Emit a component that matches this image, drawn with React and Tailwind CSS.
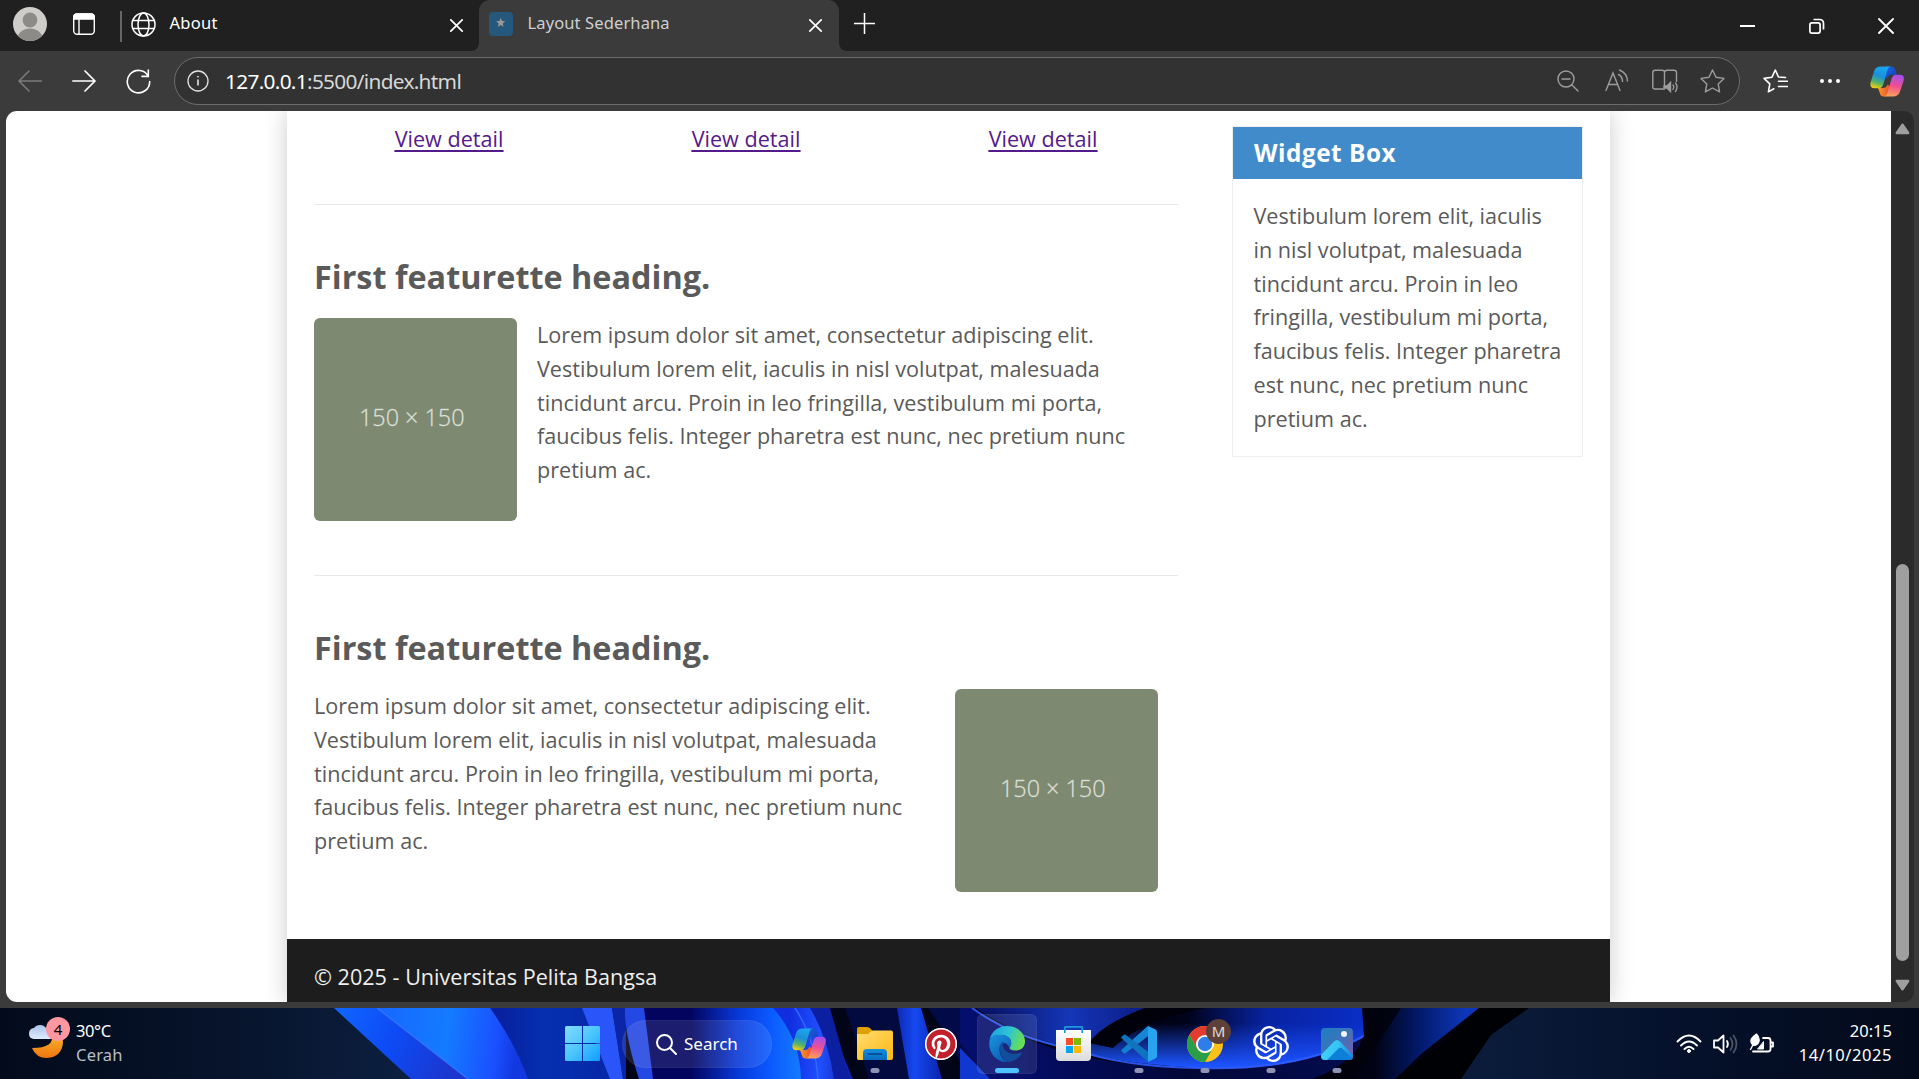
import React from "react";
import { SiOpenai } from "react-icons/si";
import { FaPinterest } from "react-icons/fa";

const lorem = "Lorem ipsum dolor sit amet, consectetur adipiscing elit. Vestibulum lorem elit, iaculis in nisl volutpat, malesuada tincidunt arcu. Proin in leo fringilla, vestibulum mi porta, faucibus felis. Integer pharetra est nunc, nec pretium nunc pretium ac.";
const widgetText = "Vestibulum lorem elit, iaculis in nisl volutpat, malesuada tincidunt arcu. Proin in leo fringilla, vestibulum mi porta, faucibus felis. Integer pharetra est nunc, nec pretium nunc pretium ac.";

const Close = ({ s = 13, w = 1.7 }) => (
  <svg width={s} height={s} viewBox="0 0 13 13" fill="none" stroke="#fff" strokeWidth={w} strokeLinecap="round"><path d="M.8.8l11.4 11.4M12.2.8L.8 12.2" /></svg>
);

function Copilot({ id }) {
  return (
    <svg width="34" height="31" viewBox="0 0 34 31" className="block">
      <defs>
        <linearGradient id={id + "a"} x1=".6" y1="0" x2=".3" y2="1"><stop offset="0" stopColor="#1aa8f0" /><stop offset=".45" stopColor="#1c8fd8" /><stop offset=".75" stopColor="#55b46a" /><stop offset="1" stopColor="#f5cc10" /></linearGradient>
        <linearGradient id={id + "b"} x1=".6" y1="0" x2=".4" y2="1"><stop offset="0" stopColor="#a44df0" /><stop offset=".5" stopColor="#ee5090" /><stop offset="1" stopColor="#fda35c" /></linearGradient>
        <linearGradient id={id + "c"} x1="0" y1="0" x2="1" y2="1"><stop offset="0" stopColor="#1e64e0" /><stop offset="1" stopColor="#1440b8" /></linearGradient>
        <linearGradient id={id + "d"} x1="0" y1="0" x2="1" y2="0"><stop offset="0" stopColor="#f89a28" /><stop offset="1" stopColor="#e8482c" /></linearGradient>
      </defs>
      <path d="M16 .5h5.500c2 0 3 1 3.600 3l1.600 5.200h-5.200c-2.500 0-3.500 1.200-4.200 3.500L13 10z" fill={`url(#${id}c)`} />
      <path d="M8 22h5c2 0 3.500-1 4.500-3.500L21 21l-1.500 6c-.8 2.400-2 3.500-4 3.500h-2c-2 0-3-1-3.500-3z" fill={`url(#${id}d)`} />
      <path d="M11 .5h10.500c-2.500 0-3.600 2-4.400 4.700l-3.600 12.500c-.9 3-2.300 4.600-4.700 4.600H4.500C1 22.300-.3 19.500.7 16L4 5.500C5 2.200 7 .5 11 .5z" fill={`url(#${id}a)`} />
      <path d="M23 30.500H13.500c2.300 0 3.500-2 4.200-4.500l3.600-12.500c.9-3 2.300-4.800 4.700-4.800h4c3.500 0 4.500 2.800 3.500 6.300L30 25.500c-1 3.400-3.500 5-7 5z" fill={`url(#${id}b)`} />
    </svg>
  );
}

function TabBar() {
  return (
    <div className="flex h-[51px] items-center bg-[#202020] text-[#fff]">
      <svg width="34" height="34" viewBox="0 0 34 34" className="-mt-[3px] ml-[13px]">
        <clipPath id="av"><circle cx="17" cy="17" r="17" /></clipPath>
        <g clipPath="url(#av)"><rect width="34" height="34" fill="#cfcdca" /><circle cx="17" cy="13" r="7.400" fill="#8d8b88" /><ellipse cx="17" cy="34" rx="13.500" ry="12.500" fill="#8d8b88" /></g>
      </svg>
      <svg width="22" height="22" viewBox="0 0 22 22" className="-mt-[3px] ml-[26px]" fill="none" stroke="#fff" strokeWidth="1.400">
        <rect x=".7" y=".9" width="20.600" height="20.300" rx="3.500" /><path d="M.7 6V4Q.7.9 4 .9h14q3.300 0 3.300 3.100v2z" fill="#fff" /><path d="M6 6v15" />
      </svg>
      <div className="mt-[2px] ml-[25px] h-[31px] w-[1.500px] bg-[#666]" />
      <svg width="25" height="25" viewBox="0 0 25 25" className="-mt-[3px] ml-[9px]" fill="none" stroke="#fff" strokeWidth="1.500">
        <circle cx="12.500" cy="12.500" r="11.500" /><ellipse cx="12.500" cy="12.500" rx="5.500" ry="11.500" /><path d="M2 8.500h21M2 16.500h21" />
      </svg>
      <span className="-mt-[4px] ml-[14px] w-[280px] text-[16.500px] tracking-[0.300px]">About</span>
      <div className="-mt-[1px] flex w-[13px] shrink-0"><Close /></div>
      <div className="relative ml-[16px] flex h-[51px] w-[360px] shrink-0 items-center rounded-t-[11px] bg-[#3b3b3b]">
        <svg width="9" height="9" className="absolute bottom-0 -left-[9px]"><path d="M9 0v9H0Q9 9 9 0" fill="#3b3b3b" /></svg>
        <svg width="9" height="9" className="absolute -right-[9px] bottom-0"><path d="M0 0v9h9Q0 9 0 0" fill="#3b3b3b" /></svg>
        <svg width="24" height="24" viewBox="0 0 24 24" className="-mt-[3px] ml-[10px]"><rect width="24" height="24" rx="4" fill="#25587c" /><path d="M11.700 6l1.300 3.100 3.300.2-2.600 2.100.9 3.300-2.900-1.800-2.900 1.800.9-3.300L7.100 9.300l3.300-.2z" fill="#9a9a9a" /></svg>
        <span className="-mt-[4px] ml-[15px] w-[281px] text-[16.500px] tracking-[0.120px] text-[#cfcfcf]">Layout Sederhana</span>
        <div className="-mt-[1px] flex"><Close /></div>
      </div>
      <svg width="21" height="21" viewBox="0 0 21 21" className="-mt-[4px] ml-[15px]" stroke="#fff" strokeWidth="1.500"><path d="M10.500 0v21M0 10.500h21" /></svg>
      <div className="ml-auto flex items-center">
        <div className="h-[2px] w-[15px] bg-white" />
        <svg width="16" height="16" viewBox="0 0 16 16" className="ml-[54px]" fill="none" stroke="#fff" strokeWidth="1.700"><rect x=".9" y="4.900" width="10.200" height="10.200" rx="2" /><path d="M4.500 1.500h6q4 0 4 4v6" /></svg>
        <div className="mr-[25px] ml-[53px]"><Close s={16} w={1.500} /></div>
      </div>
    </div>
  );
}

function Toolbar() {
  return (
    <div className="flex h-[60px] items-center bg-[#3b3b3b]">
      <svg width="24" height="22" viewBox="0 0 24 22" className="ml-[18px]" fill="none" stroke="#7c7c7c" strokeWidth="1.500" strokeLinecap="round" strokeLinejoin="round"><path d="M11 1L1 11l10 10M1 11h22.500" /></svg>
      <svg width="24" height="22" viewBox="0 0 24 22" className="ml-[30px]" fill="none" stroke="#fff" strokeWidth="1.700" strokeLinecap="round" strokeLinejoin="round"><path d="M13 1l10 10-10 10M23 11H.8" /></svg>
      <svg width="25" height="25" viewBox="0 0 25 25" className="ml-[30px]" fill="none" stroke="#fff" strokeWidth="1.600" strokeLinecap="round"><path d="M22.300 7.200A11.200 11.200 0 1 0 23.700 12.500M22.300 1v6.400H16" /></svg>
      <div className="ml-[23px] flex h-[48px] w-[1566px] items-center rounded-full border border-[#6c6c6c] bg-[#323232]">
        <svg width="22" height="22" viewBox="0 0 22 22" className="ml-[12px]" fill="none" stroke="#e4e4e4" strokeWidth="1.300"><circle cx="11" cy="11" r="10" /><path d="M11 9.500v6" strokeWidth="1.600" /><circle cx="11" cy="6.700" r=".6" fill="#e4e4e4" strokeWidth=".6" /></svg>
        <span className="mt-[2px] ml-[16px] text-[20.800px] tracking-[-0.680px] text-[#d8d8d8]"><span className="text-white">127.0.0.1</span>:5500/index.html</span>
        <div className="mr-[14px] ml-auto flex items-center text-[#9d9d9d]">
          <svg width="22" height="22" viewBox="0 0 22 22" fill="none" stroke="currentColor" strokeWidth="1.400" strokeLinecap="round"><circle cx="9" cy="9" r="8" /><path d="M5 9h8M15 15l6 6" /></svg>
          <svg width="24" height="24" viewBox="0 0 24 24" className="ml-[26px]" fill="none" stroke="currentColor" strokeWidth="1.400" strokeLinecap="round"><path d="M1 21.500L8 4l7 17.500M3.500 15.500h9M13.500 5.500q4 2 4 7M14.500 1q7.500 3 8 11" /></svg>
          <svg width="26" height="25" viewBox="0 0 26 25" className="ml-[23px]" fill="none" stroke="currentColor" strokeWidth="1.400" strokeLinecap="round"><path d="M12.500 20H3q-2.200 0-2.200-2V3.500Q.8 1.300 3 1.300h7q2.500 0 2.500 2v13M12.500 3.500q0-2.200 2.500-2.200h7q2.500 0 2.500 2.200v9" /><path d="M12 17h3l3.500-3.500v9L15 19h-3z" fill="currentColor" /><path d="M21 16q1.500 2 0 4.500M23.500 14q3 4 0 8.500" /></svg>
          <svg width="25" height="24" viewBox="0 0 25 24" className="ml-[22px]" fill="none" stroke="currentColor" strokeWidth="1.400" strokeLinejoin="round"><path d="M12.500 1l3.500 7.300 8 1.100-5.800 5.500 1.400 7.900-7.100-3.800-7.100 3.800 1.400-7.900L1 9.400l8-1.100z" /></svg>
        </div>
      </div>
      <svg width="25" height="24" viewBox="0 0 25 24" className="ml-[23px]" fill="none" stroke="#fff" strokeWidth="1.600" strokeLinejoin="round" strokeLinecap="round"><path d="M22.500 8.500l-7-.5L12.300 1 9 8.200l-8 1.200 5.800 5.500-1.400 7.900 5.500-3M15.500 12.300h9M15.500 17.500h9" /></svg>
      <div className="ml-[32px] flex gap-[4px]"><i className="size-[4px] rounded-full bg-white" /><i className="size-[4px] rounded-full bg-white" /><i className="size-[4px] rounded-full bg-white" /></div>
      <div className="ml-[30px]"><Copilot id="t" /></div>
    </div>
  );
}

const Placeholder = () => (
  <div className="flex h-[202.500px] w-[202.500px] shrink-0 items-center justify-center rounded-[6px] bg-[#7d8970] pr-[7px] pb-[2px] text-[23.400px] font-light text-[#e6e9e2] [-webkit-text-stroke:0.300px_#c9cec2]">150 × 150</div>
);

const Heading = () => <h2 className="text-[32.400px] leading-[44px] font-bold text-[#5a5a5a]">First featurette heading.</h2>;

function Page() {
  return (
    <div className="flex h-[897px] bg-[#3b3b3b] pr-[5px] pb-[6px] pl-[6px]">
      <div className="flex w-[1885px] justify-center overflow-hidden rounded-l-[11px] bg-white font-['Open_Sans',sans-serif] text-[21.600px] leading-[33.750px] text-[#5a5a5a]">
        <div className="flex h-[891px] w-[1323px] flex-col shadow-[0_0_22px_#ccc]">
          <div className="flex h-[828px] pl-[27px]">
            <main className="w-[864px]">
              <div className="flex h-[94px] border-b border-[#e8e8e8] pt-[11px] text-center text-[#551a8b] underline decoration-[1.500px] underline-offset-[3px]">
                <a className="-ml-[13.500px] w-[297px] shrink-0">View detail</a><a className="w-[297px] shrink-0">View detail</a><a className="w-[297px] shrink-0">View detail</a>
              </div>
              <section className="h-[371px] border-b border-[#e8e8e8] pt-[49px]">
                <Heading />
                <div className="mt-[20px] flex gap-[20.500px]"><Placeholder /><p className="w-[610px]">{lorem}</p></div>
              </section>
              <section className="pt-[49px]">
                <Heading />
                <div className="mt-[20px] flex justify-between pr-[20.500px]"><p className="w-[600px]">{lorem}</p><Placeholder /></div>
              </section>
            </main>
            <aside className="mt-[15px] ml-[54px] h-[331px] w-[351px] border border-[#eee]">
              <h3 className="h-[52px] bg-[#428bca] pl-[21px] text-[24.300px] leading-[52px] font-bold tracking-[0.550px] text-white">Widget Box</h3>
              <p className="pt-[20px] pr-[20px] pl-[20.500px]">{widgetText}</p>
            </aside>
          </div>
          <footer className="h-[63px] bg-[#1d1d1d] pt-[21px] pl-[27px] text-[#eee]">© 2025 - Universitas Pelita Bangsa</footer>
        </div>
      </div>
      <div className="flex w-[23px] flex-col items-center rounded-r-[10px] bg-[#2b2b2b]">
        <svg width="15" height="12" viewBox="0 0 15 12" className="mt-[12px]"><path d="M7.500 1.800L13.200 10H1.800z" fill="#9f9f9f" stroke="#9f9f9f" strokeWidth="2.400" strokeLinejoin="round" /></svg>
        <div className="mt-[429px] h-[397px] w-[13px] rounded-full bg-[#9f9f9f]" />
        <svg width="15" height="12" viewBox="0 0 15 12" className="mt-[18px]"><path d="M7.500 10.200L13.200 2H1.800z" fill="#9f9f9f" stroke="#9f9f9f" strokeWidth="2.400" strokeLinejoin="round" /></svg>
      </div>
    </div>
  );
}

function Wallpaper() {
  const g = (id, stops, p = {}) => (
    <linearGradient id={id} gradientUnits="userSpaceOnUse" y1="0" y2="0" {...p}>{stops.map(([o, c]) => <stop key={o} offset={o} stopColor={c} />)}</linearGradient>
  );
  return (
    <svg className="absolute inset-0" width="1919" height="71" viewBox="0 0 1919 71">
      <defs>
        {g("w0", [[0, "#030b1b"], [0.6, "#07142c"], [1, "#0c1f40"]], { x1: 0, x2: 400 })}
        {g("w1", [[0, "#1166ff"], [0.5, "#0d4bf5"], [1, "#1b37d0"]], { x1: 334, x2: 450, y2: 60 })}
        {g("w2", [[0, "#1768ff"], [0.5, "#147bff"], [0.85, "#1a50ff"], [1, "#1238e0"]], { x1: 380, x2: 520, y2: 20 })}
        {g("w3", [[0, "#071d9c"], [0.5, "#0530b0"], [1, "#0628a8"]], { x1: 490, x2: 600 })}
        {g("w4", [[0, "#03045e"], [0.3, "#03045e"], [0.6, "#0838d8"], [0.8, "#0a58ff"], [1, "#147aff"]], { x1: 644, x2: 800 })}
        {g("w5", [[0, "#102ee0"], [0.5, "#2050ff"], [1, "#0d22a8"]], { x1: 790, x2: 850 })}
        {g("w6", [[0, "#0a1fa0"], [0.5, "#1648f0"], [1, "#0a26b0"]], { x1: 890, x2: 940 })}
        {g("w7", [[0, "#081468"], [0.5, "#1436b8"], [1, "#0a1a80"]], { x1: 990, x2: 1150 })}
        {g("w8", [[0, "#000108"], [0.3, "#01031c"], [0.6, "#0723a0"], [1, "#0a2ec8"]], { x1: 1110, x2: 1370 })}
        {g("w9", [[0, "#010314"], [0.5, "#031a6c"], [1, "#0d36b8"]], { x1: 1375, x2: 1465 })}
        {g("wg", [[0, "#1c50ff00"], [1, "#1c54ff"]], { x1: 1230, x2: 1230, y1: 15, y2: 58 })}
        {g("wr", [[0, "#0a1c3a"], [0.5, "#05102a"], [1, "#030a1a"]], { x1: 1480, x2: 1919 })}
        {g("wb", [[0, "#040e6c"], [0.5, "#020738"], [1, "#040c50"]], { x1: 1000, x2: 1370 })}
      </defs>
      <rect width="1919" height="71" fill="#020418" />
      <path d="M0 0h420v71H0z" fill="url(#w0)" />
      <path d="M334 0h70l80 71h-73z" fill="url(#w1)" />
      <path d="M377 0h130l22 71h-61z" fill="url(#w2)" />
      <path d="M377 0l91 71" stroke="#3d7bff" strokeWidth="1.500" opacity=".7" />
      <path d="M490 0h122l13 71h-97Q515 35 490 0z" fill="url(#w3)" />
      <path d="M582 0h30l11 71h-13z" fill="#2a55f8" />
      <path d="M612 0h14v71h-3z" fill="#0a25a8" />
      <path d="M644 0h160l20 71H640z" fill="url(#w4)" />
      <path d="M625 0h19l9 71h-14Q624 25 625 0z" fill="#2448e4" />
      <path d="M773 0h50l30 71h-52Q800 30 773 0z" fill="url(#w5)" />
      <path d="M795 0q20 30 23 71" stroke="#3766ff" strokeWidth="1.500" fill="none" />
      <path d="M810 0h20l20 71h-16Q828 30 810 0z" fill="#0c1fa0" />
      <path d="M845 0h52l14 71h-42z" fill="#030a40" />
      <path d="M897 0h24l21 71h-33z" fill="url(#w6)" />
      <path d="M928 0h50l20 71h-30Q950 30 928 0z" fill="#030a48" />
      <path d="M972 0q60 44 150 55t175-4q40-10 65-24l-10 44H990L960 35V0z" fill="url(#wb)" />
      <path d="M972 0h430l-38 28q-60 34-150 32T1068 40Q1010 28 972 0z" fill="url(#w8)" />
      <path d="M972 0h430l-38 28q-60 34-150 32T1068 40Q1010 28 972 0z" fill="url(#wg)" />
      <path d="M976 0h169q-42 16-56 34l-15 6Q1014 28 976 0z" fill="url(#w7)" />
      <path d="M1145 0h60q-60 10-92 40l-24-5q14-19 56-35z" fill="#00010a" />
      <path d="M972 0q42 30 100 41 52 18 128 19 100 3 164-32" stroke="#2f5cff" strokeWidth="2" fill="none" opacity=".9" />
      <path d="M960 40q20 20 30 31h-30z" fill="#1038d0" />
      <path d="M1362 0h120l-80 71h-90q45-16 52-43z" fill="#01020e" />
      <path d="M1385 0h94l-58 46-26 25h-45q18-20 35-71z" fill="url(#w9)" />
      <path d="M1385 0h16l-46 71h-40q42-20 49-43z" fill="#01020c" opacity=".85" />
      <path d="M1479 0h50l-38 27-30 44h-66l45-33z" fill="#000104" />
      <path d="M1529 0h390v71h-458l30-44z" fill="url(#wr)" />
    </svg>
  );
}

const Dot = () => <div className="absolute bottom-[6px] left-1/2 h-[5px] w-[9px] -translate-x-1/2 rounded-full bg-[#8e93b4]" />;
const Cell = ({ children, dot }) => <div className="relative flex h-[71px] w-[66px] items-center justify-center">{children}{dot && <Dot />}</div>;

const Start = () => (
  <svg width="35" height="35" viewBox="0 0 35 35"><defs><linearGradient id="st" x1="0" y1="0" x2="1" y2="1"><stop offset="0" stopColor="#84dcff" /><stop offset=".5" stopColor="#4cc6fd" /><stop offset="1" stopColor="#109cff" /></linearGradient></defs><path d="M1.500 0H17v17H0V1.500Q0 0 1.500 0zM18 0h15.500Q35 0 35 1.500V17H18zM0 18h17v17H1.500Q0 35 0 33.500zM18 18h17v15.500q0 1.500-1.500 1.500H18z" fill="url(#st)" /></svg>
);
const Explorer = () => (
  <svg width="36" height="33" viewBox="0 0 36 33"><defs><linearGradient id="ex" x1="0" y1="0" x2="1" y2="1"><stop offset="0" stopColor="#ffdc70" /><stop offset="1" stopColor="#fcb813" /></linearGradient><linearGradient id="ex2" x1="0" y1="0" x2="0" y2="1"><stop offset="0" stopColor="#1390dc" /><stop offset="1" stopColor="#0a6bc0" /></linearGradient></defs><path d="M0 2Q0 0 2 0h8q2 0 4 2l2 3v5H0z" fill="#e0a000" /><path d="M0 7h11l4-3.500h19q2 0 2 2V31q0 2-2 2H1.500Q0 33 0 31z" fill="url(#ex)" /><path d="M6 33v-7q0-4 4-4h16q4 0 4 4v7z" fill="url(#ex2)" /><path d="M11.500 27h13" stroke="#09509a" strokeWidth="1.800" strokeLinecap="round" /></svg>
);
const Edge = () => (
  <svg width="36" height="36" viewBox="0 0 36 36"><defs><linearGradient id="e1" x1="0" y1=".2" x2="1" y2=".5"><stop offset="0" stopColor="#1f9fe0" /><stop offset=".5" stopColor="#2cc4d6" /><stop offset="1" stopColor="#6be04c" /></linearGradient><linearGradient id="e2" x1="0" y1="0" x2=".7" y2="1"><stop offset="0" stopColor="#1b95e0" /><stop offset="1" stopColor="#0b5cb4" /></linearGradient></defs>
    <path d="M.5 14C2 5.500 9.500 0 18 0c10 0 18 7 18 15.500 0 5.500-4 9-9.500 9-4 0-6-1.200-6-2.500 0-.8 1.700-1.800 1.700-5C22.200 12.500 18 9 12 9 6 9 2 11 .5 14z" fill="url(#e1)" />
    <path d="M.4 15.500C1.500 11 6 8.800 11.500 8.800c6.500 0 10.700 3.700 10.700 8 0 3.500-1.700 4.200-1.700 5-3-7-9-6-10 1C10 29 14 34.500 19.500 36 9 37-.9 28.500.4 15.500z" fill="url(#e2)" />
    <path d="M14.500 15c-3 2-4.500 5-4 8.500.8 6.500 5.500 11.500 9 12.400 5.500-.4 10.500-3.600 13-8.200.5-1-.2-1.500-1-1C24 30 14 26 14 19c0-1.500.1-3 .5-4z" fill="#114f9c" />
  </svg>
);
const Store = () => (
  <svg width="35" height="35" viewBox="0 0 35 35"><defs><linearGradient id="so" x1="0" y1="0" x2="0" y2="1"><stop offset="0" stopColor="#fff" /><stop offset="1" stopColor="#dcdcdc" /></linearGradient></defs><path d="M0 4h35v27q0 4-4 4H4q-4 0-4-4z" fill="url(#so)" /><path d="M8.800 7V1.500Q8.800.8 9.500.8h16q.7 0 .7.700V7" fill="none" stroke="#1c98dc" strokeWidth="1.700" /><path d="M10 12h7v7h-7z" fill="#f25022" /><path d="M18 12h7v7h-7z" fill="#7fba00" /><path d="M10 20h7v7h-7z" fill="#00a4ef" /><path d="M18 20h7v7h-7z" fill="#ffb900" /></svg>
);
const Code = () => (
  <svg width="36" height="36" viewBox="0 0 36 36"><path d="M27 0L.8 23.500q-1 1 0 2l2 1.800q.8.600 1.700 0L27 10z" fill="#1180cf" /><path d="M27 36L.8 12.500q-1-1 0-2l2-1.800q.8-.6 1.700 0L27 26z" fill="#0f73bd" /><path d="M27 0l7.500 3.500Q36 4.300 36 5.800v24.400q0 1.500-1.500 2.300L27 36z" fill="#29a3f0" /><path d="M27 0L12 13.600l5.500 3.900L27 10z" fill="#1686d4" /></svg>
);
const Chrome = () => (
  <svg width="36" height="36" viewBox="0 0 36 36"><circle cx="18" cy="18" r="18" fill="#fbc116" /><path d="M2.400 9A18 18 0 0 1 33.600 9H18L10.200 22.500z" fill="#e33b2e" /><path d="M2.400 9l7.800 13.500q3 4.500 7.800 4.500 5 0 7.800-4.500L18 36A18 18 0 0 1 2.400 9z" fill="#2a9d48" /><circle cx="18" cy="18" r="9" fill="#fff" /><circle cx="18" cy="18" r="7.200" fill="#2f7de9" /></svg>
);
const Photos = () => (
  <svg width="32" height="32" viewBox="0 0 32 32"><defs><linearGradient id="ph" x1="0" y1="0" x2="1" y2="1"><stop offset="0" stopColor="#1b7fc4" /><stop offset=".5" stopColor="#3f72b8" /><stop offset="1" stopColor="#8a5aa8" /></linearGradient><linearGradient id="ph2" x1="0" y1="0" x2="1" y2="0"><stop offset="0" stopColor="#3fd0fa" /><stop offset=".55" stopColor="#35c3f4" /><stop offset="1" stopColor="#1580d8" /></linearGradient><clipPath id="pc"><rect width="32" height="32" rx="4" /></clipPath></defs><g clipPath="url(#pc)"><rect width="32" height="32" fill="url(#ph)" /><path d="M-1 28l14-14.500q3-3 6 0L33 28v5H-1z" fill="url(#ph2)" /><path d="M5 33l12-12q2.500-2.500 5 0l12 12z" fill="#0c7fd8" /></g><circle cx="23" cy="6" r="3" fill="#f2f4f8" /></svg>
);

function Taskbar() {
  return (
    <div className="relative flex h-[71px] overflow-hidden bg-[#030b1c] text-[16.500px] text-white">
      <Wallpaper />
      <div className="relative flex w-[549px]">
        <div className="relative mt-[8px] ml-[28px] h-[42px] w-[42px]">
          <svg width="42" height="43" viewBox="0 0 42 43"><defs><linearGradient id="mo" x1="0" y1="0" x2="0" y2="1"><stop offset="0" stopColor="#fbb82c" /><stop offset="1" stopColor="#ee7410" /></linearGradient><linearGradient id="cl" x1="0" y1="0" x2="0" y2="1"><stop offset="0" stopColor="#a9c4ee" /><stop offset="1" stopColor="#e0ebfb" /></linearGradient></defs><path d="M4 32Q8 42 19 42q15-1 16-16 0-4-2-7l-9-1q3 14-20 14z" fill="url(#mo)" /><path d="M6 23q-5-.5-5-5.500t5-5.500q2-3 6-3 5 0 7 5l4 9z" fill="url(#cl)" /></svg>
          <span className="absolute top-[1px] left-[18px] flex size-[24px] items-center justify-center rounded-full bg-[#ff97a0] text-[15px] text-black">4</span>
        </div>
        <div className="mt-[11px] ml-[6px] leading-[24px]"><div className="tracking-[-0.400px]">30°C</div><div className="text-[#b9bec6] tracking-[0.200px]">Cerah</div></div>
      </div>
      <Cell><Start /></Cell>
      <div className="relative mt-[12px] ml-[7px] flex h-[48px] w-[150px] items-center rounded-full border border-white/5 bg-white/10">
        <svg width="21" height="21" viewBox="0 0 21 21" className="ml-[33px]" fill="none" stroke="#fff" strokeWidth="2"><circle cx="8.500" cy="8.500" r="7.500" /><path d="M14 14l6 6" strokeLinecap="round" /></svg>
        <span className="ml-[7px] text-[17px]">Search</span>
      </div>
      <div className="relative ml-[4px] flex">
        <Cell><Copilot id="b" /></Cell>
        <Cell dot><Explorer /></Cell>
        <Cell><div className="rounded-full bg-white"><FaPinterest size={32} color="#c1202c" className="block rounded-full border border-white" /></div></Cell>
        <Cell><div className="absolute top-[6px] left-[3px] h-[60px] w-[60px] rounded-[6px] border border-white/5 bg-white/10" /><div className="relative"><Edge /></div><div className="absolute bottom-[6px] left-[21px] h-[5px] w-[24px] rounded-full bg-[#4cc2ff]" /></Cell>
        <Cell><Store /></Cell>
        <Cell dot><Code /></Cell>
        <Cell dot><Chrome /><span className="absolute top-[11px] left-[34px] flex size-[25px] items-center justify-center rounded-full bg-[#5d4037] text-[15px] text-[#ddd]">M</span></Cell>
        <Cell dot><SiOpenai size={36} /></Cell>
        <Cell dot><Photos /></Cell>
      </div>
      <div className="relative mr-[27px] ml-auto flex items-center">
        <svg width="26" height="20" viewBox="0 0 26 20" fill="none" stroke="#fff" strokeWidth="1.900" strokeLinecap="round"><path d="M1.500 7.500q11.500-12 23 0M5 11.500q8-8 16 0M8.500 15q4.500-4.500 9 0" /><circle cx="13" cy="17" r="1.500" fill="#fff" strokeWidth="1" /></svg>
        <svg width="25" height="20" viewBox="0 0 25 20" className="ml-[11px]" fill="none" stroke="#fff" strokeWidth="1.800" strokeLinejoin="round" strokeLinecap="round"><path d="M1 6.500h4L10.500 1.500v17L5 13.500H1z" /><path d="M14 7q1.800 3 0 6" /><path d="M17.500 4q4 6 0 12M20.500 1.500q6 8.500 0 17" stroke="#4a5364" /></svg>
        <svg width="25" height="21" viewBox="0 0 25 21" className="ml-[11px]" fill="none" stroke="#fff" strokeWidth="1.800" strokeLinejoin="round" strokeLinecap="round"><path d="M14 5h5q2.500 0 2.500 2.500V16q0 2.500-2.500 2.500H4M22.500 9.500h1.500v4h-1.500" /><path d="M14.500 9v7H9z" fill="#fff" strokeWidth="1" /><path d="M7.500 1Q11 4.500 10 8.500 8.500 12.500 5 12.500.500 10 2.500 5.500 4 3.500 7.500 1z" fill="#fff" strokeWidth="1.200" /><path d="M6.500 7L1.500 16.500" strokeWidth="1.400" /></svg>
        <div className="ml-[25px] text-right leading-[24px] -mt-[1px]"><div>20:15</div><div className="tracking-[0.550px]">14/10/2025</div></div>
      </div>
    </div>
  );
}

export default function App() {
  return (
    <div className="flex h-[1079px] w-[1919px] flex-col overflow-hidden bg-[#3b3b3b] font-['Noto_Sans',sans-serif]">
      <TabBar /><Toolbar /><Page /><Taskbar />
    </div>
  );
}
